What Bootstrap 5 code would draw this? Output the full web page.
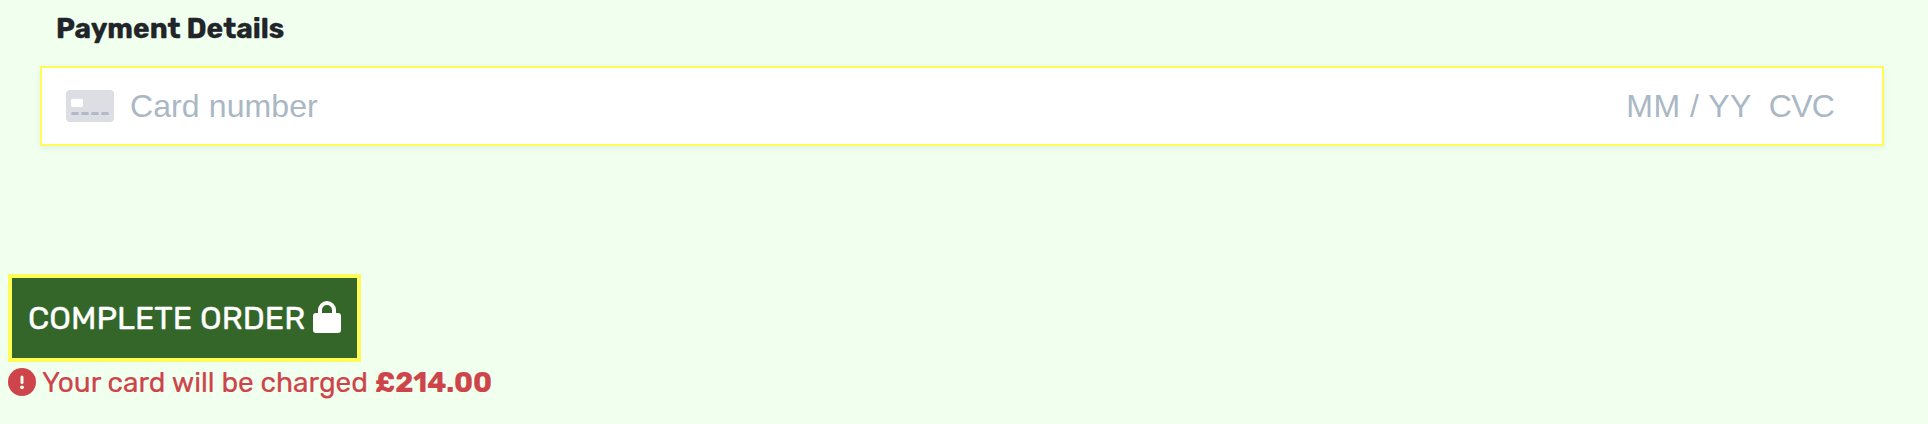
<!DOCTYPE html>
<html lang="en">
<head>
<meta charset="utf-8">
<meta name="viewport" content="width=device-width, initial-scale=1">
<title>Payment Details</title>
<link rel="stylesheet" href="https://cdn.jsdelivr.net/npm/bootstrap@5.3.0/dist/css/bootstrap.min.css">
<style>
  body { background: #f0ffee; font-family: Rubik, Roboto, sans-serif; color: #212529; }
  .checkout { height: 424px; padding: 9px 8px 0; }
  .pay-title { font-size: 28px; line-height: 40px; font-weight: 700; padding-left: 48px; margin-bottom: 17px; -webkit-text-stroke: .3px; }
  .pay-field { height: 80px; margin: 0 36px 128px 32px; padding: 0 48px 0 24px; background: #fff;
    border: 2px solid #fffc58; box-shadow: 0 2px 6px rgba(40, 30, 90, .07);
    font: 32px "Liberation Sans", Arial, sans-serif; color: #aab7c4; }
  .pay-field svg { margin-right: 16px; }
  .card-no { letter-spacing: .1px; }
  .expiry { margin-right: 17px; letter-spacing: .5px; }
  .cvc { letter-spacing: -.8px; }
  .order-btn { width: 353px; height: 88px; padding: 0 0 0 16px; border: 4px solid #fffc58; border-radius: 0;
    background: #336628; color: #fff; font-size: 32px; line-height: 40px; -webkit-text-stroke: .4px; }
  .order-btn:hover { background: #2b5822; color: #fff; border-color: #fffc58; }
  .order-btn svg { margin: 0 0 2px 8px; }
  .charge { color: #cd444a; font-size: 28px; line-height: 40px; padding-top: 1px; -webkit-text-stroke: .2px; }
  .charge svg { margin: 0 6px 3px 0; }
  .charge strong { margin-left: 7px; }
</style>
</head>
<body>
<main class="checkout d-flex flex-column align-items-start">
  <h1 class="pay-title">Payment Details</h1>
  <div class="pay-field d-flex align-items-center align-self-stretch">
    <svg width="48" height="32" viewBox="0 0 48 32" aria-hidden="true">
      <rect width="48" height="32" rx="4" fill="#dddde4"/>
      <rect x="5" y="8.700" width="12" height="8.300" rx="1.500" fill="#fff"/>
      <path d="M6.500 23.500h5M16.500 23.500h5M26.500 23.500h5M36.500 23.500h5" stroke="#b4b9c9" stroke-width="3" stroke-linecap="round"/>
    </svg>
    <span class="card-no me-auto">Card number</span>
    <span class="expiry">MM / YY</span>
    <span class="cvc">CVC</span>
  </div>
  <button class="order-btn btn d-flex align-items-center" type="button">
    <span>COMPLETE ORDER</span>
    <svg width="28" height="32" viewBox="0 0 28 32" fill="#fff" aria-hidden="true">
      <path fill-rule="evenodd" d="M25 12h-2V9a9 9 0 0 0-18 0v3H3a3 3 0 0 0-3 3v14a3 3 0 0 0 3 3h22a3 3 0 0 0 3-3V15a3 3 0 0 0-3-3zM19 12H9V9a5 5 0 0 1 10 0v3z"/>
    </svg>
  </button>
  <div class="charge d-flex align-items-center">
    <svg width="28" height="28" viewBox="0 0 28 28" aria-hidden="true">
      <circle cx="14" cy="14" r="14" fill="#cd444a"/>
      <path d="M14 9v5.500" stroke="#f0ffee" stroke-width="3" stroke-linecap="round"/>
      <circle cx="14" cy="19.300" r="1.900" fill="#f0ffee"/>
    </svg>
    <span>Your card will be charged</span>
    <strong>£214.00</strong>
  </div>
</main>
<script src="https://cdn.jsdelivr.net/npm/bootstrap@5.3.0/dist/js/bootstrap.bundle.min.js"></script>
</body>
</html>
